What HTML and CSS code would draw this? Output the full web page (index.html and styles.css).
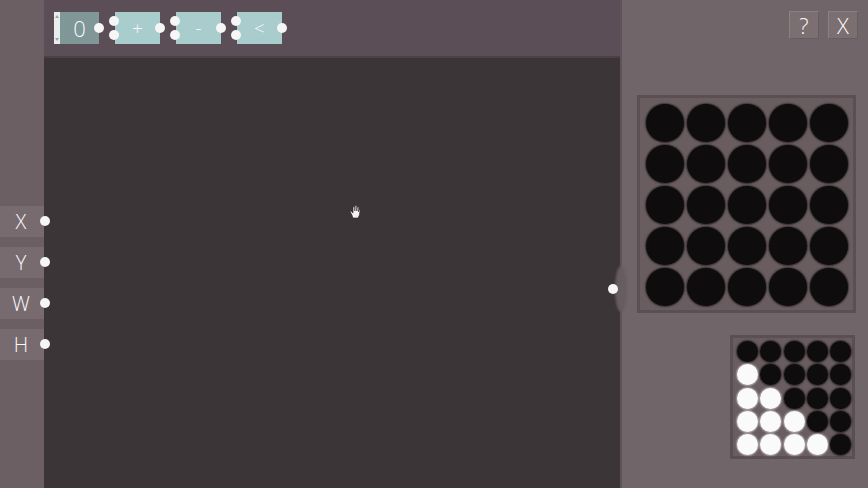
FILE: index.html
```html
<!DOCTYPE html>
<html>
<head>
<meta charset="utf-8">
<link rel="stylesheet" href="styles.css">
</head>
<body>
<div class="app">
  <aside class="side">
    <div class="label">X<span class="port out"></span></div>
    <div class="label">Y<span class="port out"></span></div>
    <div class="label">W<span class="port out"></span></div>
    <div class="label">H<span class="port out"></span></div>
  </aside>
  <main class="main">
    <div class="topbar">
      <div class="block num">
        <div class="stepper"><span class="up"></span><span class="down"></span></div>
        <span class="txt">0</span>
        <span class="port out"></span>
      </div>
      <div class="block op">
        <span class="port in1"></span><span class="port in2"></span>
        <span class="txt">+</span>
        <span class="port out"></span>
      </div>
      <div class="block op">
        <span class="port in1"></span><span class="port in2"></span>
        <span class="txt">-</span>
        <span class="port out"></span>
      </div>
      <div class="block op">
        <span class="port in1"></span><span class="port in2"></span>
        <span class="txt">&lt;</span>
        <span class="port out"></span>
      </div>
    </div>
    <div class="canvas">
      <svg class="cursor" width="12" height="14" viewBox="0 0 12 14">
        <path d="M4 13 L2.5 9 L1 6.5 L2 6 L4 8 L4 2 L5 1.5 L5.8 2 L5.8 6 L6 1 L7 0.6 L7.8 1 L7.8 6 L8.2 2 L9.2 1.8 L9.8 2.3 L9.6 7 L10.2 4.5 L11 4.5 L11.2 5.2 L10.4 10 L9 13 Z" fill="#f4f2f2" stroke="#2a2425" stroke-width="0.6"/>
      </svg>
    </div>
  </main>
  <section class="panel">
    <div class="bump"></div>
    <span class="port panel-in"></span>
    <div class="buttons">
      <div class="btn">?</div>
      <div class="btn">X</div>
    </div>
    <div class="grid big">
      <i></i><i></i><i></i><i></i><i></i>
      <i></i><i></i><i></i><i></i><i></i>
      <i></i><i></i><i></i><i></i><i></i>
      <i></i><i></i><i></i><i></i><i></i>
      <i></i><i></i><i></i><i></i><i></i>
    </div>
    <div class="grid small">
      <i></i><i></i><i></i><i></i><i></i>
      <i class="w"></i><i></i><i></i><i></i><i></i>
      <i class="w"></i><i class="w"></i><i></i><i></i><i></i>
      <i class="w"></i><i class="w"></i><i class="w"></i><i></i><i></i>
      <i class="w"></i><i class="w"></i><i class="w"></i><i class="w"></i><i></i>
    </div>
  </section>
</div>
</body>
</html>
```
FILE: styles.css
```css
* { box-sizing: border-box; }
html, body { margin: 0; padding: 0; }
body {
  width: 868px;
  height: 488px;
  overflow: hidden;
  font-family: "Open Sans", "DejaVu Sans", sans-serif;
  background: #3b3537;
}
.app {
  display: flex;
  width: 868px;
  height: 488px;
}

/* left sidebar */
.side {
  width: 44px;
  flex: none;
  background: #6b5f63;
  display: flex;
  flex-direction: column;
  gap: 10px;
  padding-top: 206px;
  position: relative;
  z-index: 2;
}
.label {
  position: relative;
  height: 31px;
  width: 44px;
  background: #776b6f;
  color: #fbf9f9;
  font-size: 20px;
  font-weight: 300;
  line-height: 31px;
  text-align: center;
  padding-right: 2px;
}
.port {
  position: absolute;
  width: 10px;
  height: 10px;
  border-radius: 50%;
  background: #f7f6f6;
}
.label .out { right: -6px; top: 10px; }

/* main */
.main {
  width: 576px;
  flex: none;
  display: flex;
  flex-direction: column;
}
.topbar {
  height: 58px;
  background: #5b4e56;
  border-bottom: 2px solid #4b4047;
  display: flex;
  align-items: flex-start;
  padding: 12px 0 0 10px;
  gap: 16px;
}
.block {
  position: relative;
  width: 45px;
  height: 32px;
  display: flex;
  align-items: center;
  justify-content: center;
  color: #f8fafa;
  font-weight: 300;
}
.block.num {
  background: #7f9796;
  font-size: 22px;
  padding-left: 6px;
}
.block.op {
  background: #a9cccd;
  font-size: 19px;
}
.stepper {
  position: absolute;
  left: 0;
  top: 0;
  width: 6px;
  height: 32px;
  background: #e9eded;
  display: flex;
  flex-direction: column;
  justify-content: space-between;
  align-items: center;
  padding: 3px 0;
}
.stepper .up {
  width: 0; height: 0;
  border-left: 2px solid transparent;
  border-right: 2px solid transparent;
  border-bottom: 3px solid #9aa4a4;
}
.stepper .down {
  width: 0; height: 0;
  border-left: 2px solid transparent;
  border-right: 2px solid transparent;
  border-top: 3px solid #9aa4a4;
}
.block .out { right: -5px; top: 11px; }
.block .in1 { left: -6px; top: 4px; }
.block .in2 { left: -6px; top: 18px; }

.canvas {
  flex: 1;
  background: #3b3537;
  position: relative;
}
.cursor {
  position: absolute;
  left: 305px;
  top: 147px;
}

/* right panel */
.panel {
  position: relative;
  width: 248px;
  flex: none;
  background: #706568;
  border-left: 2px solid #5f5558;
  display: flex;
  flex-direction: column;
  align-items: flex-end;
  padding: 11px 10px 0 0;
}
.bump {
  position: absolute;
  left: -7px;
  top: 266px;
  width: 12px;
  height: 46px;
  border-radius: 50%;
  background: #675c5f;
  filter: blur(1px);
  z-index: 0;
}
.panel-in {
  left: -14px;
  top: 284px;
  z-index: 1;
}
.buttons {
  display: flex;
  gap: 9px;
}
.btn {
  width: 30px;
  height: 28px;
  background: #7b6f72;
  border: 1px solid #8b8083;
  border-right-color: #675c5f;
  border-bottom-color: #675c5f;
  color: #fbf9f9;
  font-size: 22px;
  font-weight: 300;
  line-height: 26px;
  text-align: center;
}
.grid {
  display: grid;
  grid-template-columns: repeat(5, auto);
  background: #695d60;
  border: 3px solid #5a4f52;
}
.grid i {
  display: block;
  border-radius: 50%;
  background: #0e0c0c;
  box-shadow: 0 0 1.5px 1px rgba(20, 16, 16, 0.6);
}
.grid.big {
  margin-top: 56px;
  margin-right: 2px;
  width: 219px;
  height: 218px;
  padding: 6px 5px 5px 6px;
  gap: 3px;
}
.grid.big i { width: 38px; height: 38px; }
.grid.small {
  margin-top: 22px;
  margin-right: 3px;
  width: 125px;
  height: 124px;
  padding: 3px 3px 3px 4px;
  gap: 2.3px;
}
.grid.small i { width: 21px; height: 21px; }
.grid.small i.w {
  background: #fbfafa;
  box-shadow: 0 0 1.5px 1px rgba(255, 255, 255, 0.4);
}
```
